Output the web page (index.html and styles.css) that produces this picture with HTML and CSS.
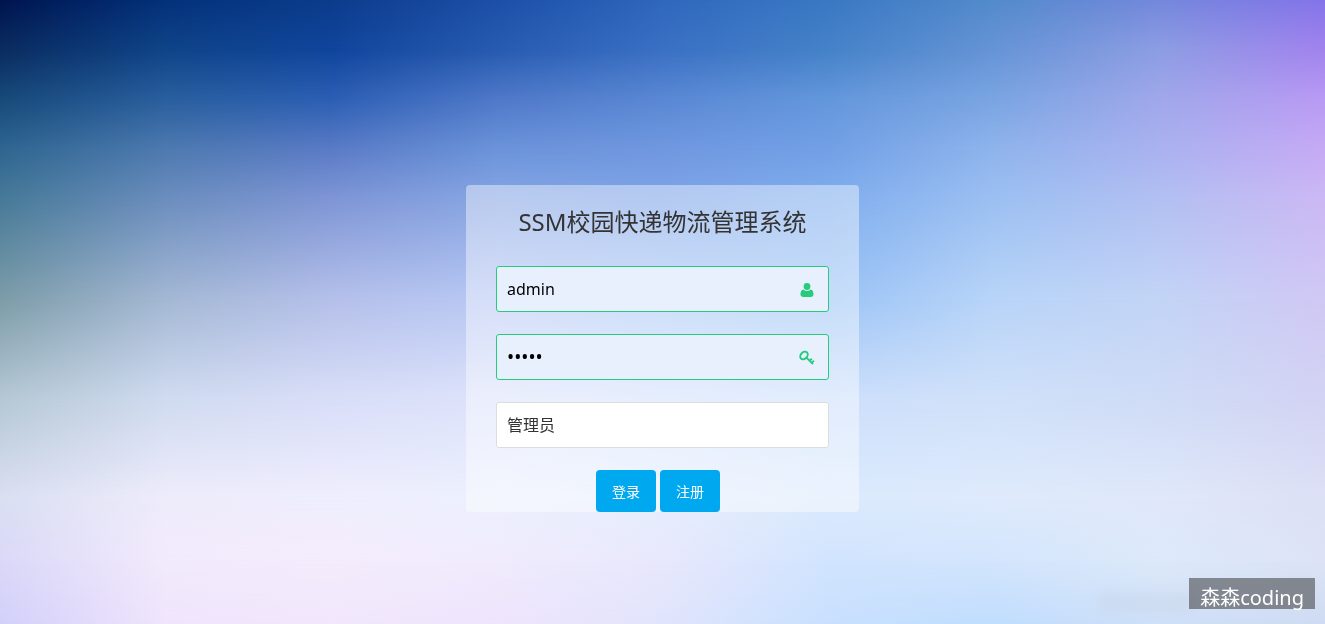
FILE: index.html
```html
<!DOCTYPE html>
<html lang="zh-CN">
<head>
<meta charset="utf-8">
<title>SSM校园快递物流管理系统</title>
<link rel="stylesheet" href="styles.css">
</head>
<body>
<div class="backdrop" aria-hidden="true">
  <div class="band band-1"></div>
  <div class="band band-2"></div>
  <div class="band band-3"></div>
  <div class="band band-4"></div>
  <div class="band band-5"></div>
  <div class="band band-6"></div>
  <div class="band band-7"></div>
  <div class="band band-8"></div>
  <div class="band band-9"></div>
  <div class="band band-10"></div>
  <div class="smudge"></div>
</div>
<main class="page">
  <form class="login">
    <h1 class="title">SSM校园快递物流管理系统</h1>
    <div class="field valid">
      <input class="control" type="text" value="admin" aria-label="用户名">
      <svg class="icon" viewBox="0 0 16 16" aria-hidden="true"><circle cx="8" cy="4.500" r="3.400"/><path d="M4.700 7.500C2.300 7.700 1.500 9.700 1.500 12.300C1.500 14 2.600 15 4.200 15H11.800C13.400 15 14.500 14 14.500 12.300C14.500 9.700 13.700 7.700 11.300 7.500C10.400 8.500 9.300 9 8 9C6.700 9 5.600 8.500 4.700 7.500Z"/></svg>
    </div>
    <div class="field valid">
      <input class="control password" type="password" value="admin" aria-label="密码">
      <svg class="icon" viewBox="0 0 16 16" aria-hidden="true"><g fill="none" stroke="currentColor" stroke-width="1.900"><ellipse cx="5" cy="5.500" rx="4.300" ry="3.200" transform="rotate(-45 5 5.500)"/><path d="M7.200 7.400l6.800 6.800M10.600 10.800l2.200-2.200M12.700 12.900l2.200-2.200"/></g></svg>
    </div>
    <div class="field">
      <select class="control" aria-label="角色">
        <option>管理员</option>
      </select>
    </div>
    <div class="actions">
      <button class="button" type="button">登录</button>
      <button class="button" type="button">注册</button>
    </div>
  </form>
</main>
<div class="signature">森森coding</div>
</body>
</html>
```
FILE: styles.css
```css
* {
  box-sizing: border-box;
}

body {
  margin: 0;
  min-height: 100vh;
  color: #333;
  font-family: "Noto Sans", "Noto Sans CJK SC", sans-serif;
}

/* Each band is a horizontal blend that fades in over the one before it */
.backdrop {
  position: fixed;
  inset: 0;
  z-index: -1;
  overflow: hidden;
}

.band {
  position: absolute;
  inset: 0;
}

.band-1 {
  background: linear-gradient(to right, #00144f, #04317a, #0b3c8c, #1d4fa8, #2f68bd, #3a78c4, #538bcc, #7488dc, #8574ea);
}

.band-2 {
  background: linear-gradient(to right, #0a2c60, #0f4488, #10459c, #275bb0, #3a70c4, #4582c8, #6694d6, #8d9de3, #a283ee);
  mask-image: linear-gradient(transparent 0%, #000 8%);
}

.band-3 {
  background: linear-gradient(to right, #184a7a, #2a5f9e, #2c5fb4, #5079c9, #5a88d4, #6497dc, #7aa5e2, #a0a8ea, #b99af4);
  mask-image: linear-gradient(transparent 8%, #000 16%);
}

.band-4 {
  background: linear-gradient(to right, #2f6690, #4e7ab0, #5b7bc6, #6b94da, #7098e0, #72a0e6, #8fb4ec, #aab2f0, #c6aaf5);
  mask-image: linear-gradient(transparent 16%, #000 24%);
}

.band-5 {
  background: linear-gradient(to right, #477a98, #6c8ebe, #7f96d6, #88a6e4, #7fa4e8, #80aeee, #9cc0f2, #b2c0f2, #ccb8f4);
  mask-image: linear-gradient(transparent 24%, #000 32%);
}

.band-6 {
  background: linear-gradient(to right, #7c9ca8, #a4b8d4, #b5c0ea, #b8c8f4, #a8c8f6, #9cc4f6, #b8d4f8, #c2d4f6, #d0c8f4);
  mask-image: linear-gradient(transparent 32%, #000 48%);
}

.band-7 {
  background: linear-gradient(to right, #b5c8d4, #d0dbf0, #d9def8, #dde3fb, #d4e2fc, #cddffc, #d0e1f9, #cfdcf6, #d3d3f3);
  mask-image: linear-gradient(transparent 48%, #000 64%);
}

.band-8 {
  background: linear-gradient(to right, #dadff2, #eeecfb, #efeefd, #ecf0fe, #e6eefd, #dbeafc, #deeafc, #e0e8fa, #dde0f5);
  mask-image: linear-gradient(transparent 64%, #000 80%);
}

.band-9 {
  background: linear-gradient(to right, #dad8f8, #f2eafc, #f4ecfc, #f0ebfd, #e8e8fc, #d1e4fe, #d3e5fd, #dce9f9, #dce3f5);
  mask-image: linear-gradient(transparent 80%, #000 90%);
}

.band-10 {
  background: linear-gradient(to right, #d2d0fa, #efe4fc, #f1e6fc, #eee4fc, #e0e4fc, #c8e0fe, #c0ddfe, #cfdff8, #cedbf2);
  mask-image: linear-gradient(transparent 90%, #000 100%);
}

.smudge {
  position: absolute;
  right: 130px;
  bottom: 12px;
  width: 96px;
  height: 20px;
  background: rgba(170, 185, 190, 0.12);
  filter: blur(6px);
}

.page {
  display: flex;
  justify-content: center;
  padding: 185px 16px 0;
}

.login {
  display: flex;
  flex-direction: column;
  gap: 22px;
  width: 100%;
  max-width: 393px;
  padding: 20px 30px 0;
  border-radius: 4px;
  background: rgba(255, 255, 255, 0.42);
}

.title {
  margin: 0 0 6px;
  font-size: 24px;
  font-weight: 400;
  line-height: 33px;
  text-align: center;
}

.field {
  position: relative;
}

.control {
  display: block;
  width: 100%;
  height: 46px;
  margin: 0;
  padding: 0 10px;
  border: 1px solid #ddd;
  border-radius: 3px;
  outline: none;
  background: #fff;
  color: #333;
  font-family: inherit;
  font-size: 16px;
  appearance: none;
}

.valid .control {
  padding-right: 40px;
  border-color: #26cb7c;
  background: #e8f0fe;
  color: #000;
}

.control.password {
  font-size: 19px;
}

.icon {
  position: absolute;
  top: 16px;
  right: 14px;
  width: 16px;
  height: 16px;
  color: #26cb7c;
  fill: currentColor;
}

.actions {
  display: flex;
  justify-content: center;
  gap: 4px;
  padding-right: 9px;
}

.button {
  height: 42px;
  padding: 0 16px;
  border: 0;
  border-radius: 4px;
  background: #00a8f0;
  color: #fff;
  font-family: inherit;
  font-size: 14px;
}

.signature {
  position: fixed;
  right: 10px;
  bottom: 15px;
  height: 31px;
  padding: 0 11px;
  background: rgba(60, 60, 60, 0.55);
  color: #fff;
  font-size: 20px;
  line-height: 40px;
}
```
